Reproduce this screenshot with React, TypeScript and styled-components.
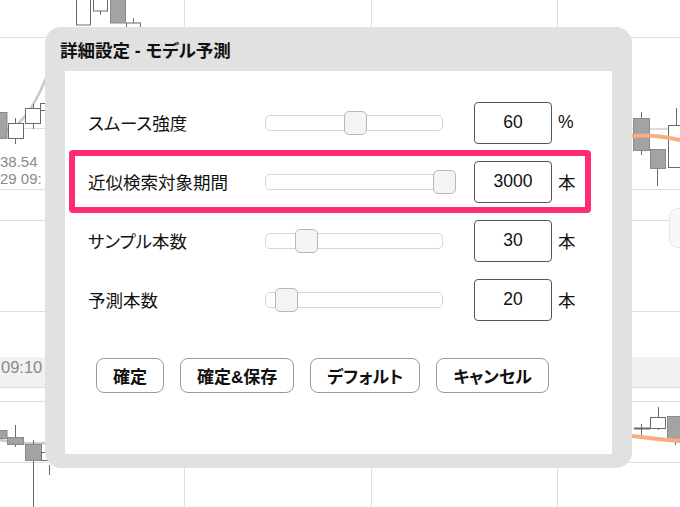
import styled, { createGlobalStyle } from "styled-components";

const GlobalStyle = createGlobalStyle`
  body {
    margin: 0;
    font-family: "Liberation Sans", "Noto Sans CJK JP", sans-serif;
    color: #111;
  }
`;

const settings = [
  { label: "スムース強度", value: "60", unit: "%", thumb: 79 },
  { label: "近似検索対象期間", value: "3000", unit: "本", thumb: 168, highlight: true },
  { label: "サンプル本数", value: "30", unit: "本", thumb: 30 },
  { label: "予測本数", value: "20", unit: "本", thumb: 10 },
];

const actions = ["確定", "確定&保存", "デフォルト", "キャンセル"];

const Screen = styled.div`
  position: relative;
  width: 680px;
  height: 507px;
  overflow: hidden;
  background: #fff;
`;

const ChartLayer = styled.svg`
  position: absolute;
  inset: 0;
`;

const Dialog = styled.div`
  position: absolute;
  left: 45px;
  top: 27px;
  width: 587px;
  height: 441px;
  box-sizing: border-box;
  display: flex;
  flex-direction: column;
  padding-bottom: 14px;
  background: #e1e1e1;
  border-radius: 16px;
`;

const DialogTitle = styled.h2`
  margin: 0;
  height: 44px;
  display: flex;
  align-items: center;
  padding-left: 15px;
  font-size: 17.5px;
  font-weight: 700;
  font-feature-settings: "palt";
`;

const Body = styled.div`
  flex: 1;
  margin: 0 20px;
  padding-top: 22px;
  background: #fff;
`;

const SettingRow = styled.div<{ $highlight?: boolean }>`
  box-sizing: border-box;
  display: flex;
  align-items: center;
  height: ${(p) => (p.$highlight ? "63px" : "59px")};
  margin: ${(p) => (p.$highlight ? "-2px 21px -2px 4px" : "0 21px 0 4px")};
  padding-left: 13px;
  border: 6px solid ${(p) => (p.$highlight ? "#ff2d6f" : "transparent")};
  border-radius: 4px;
`;

const Label = styled.span`
  width: 177px;
  font-size: 17.5px;
  font-feature-settings: "palt";
`;

const Track = styled.div`
  position: relative;
  box-sizing: border-box;
  width: 178px;
  height: 16px;
  border: 1px solid #d6d6d6;
  border-radius: 5px;
  background: #fff;
`;

const Thumb = styled.div`
  position: absolute;
  top: -5px;
  box-sizing: border-box;
  width: 23px;
  height: 24px;
  border: 1px solid #b8b8b8;
  border-radius: 5px;
  background: #f4f4f4;
`;

const ValueBox = styled.input`
  box-sizing: border-box;
  width: 78px;
  height: 42px;
  margin: 0 0 0 31px;
  padding: 0;
  border: 1px solid #555;
  border-radius: 4px;
  background: #fff;
  font: 17.5px "Liberation Sans", "Noto Sans CJK JP", sans-serif;
  color: #111;
  text-align: center;
  outline: none;
`;

const Unit = styled.span`
  margin-left: 6px;
  font-size: 17.5px;
`;

const ButtonRow = styled.div`
  display: flex;
  gap: 16px;
  margin-top: 29px;
  padding-left: 31px;
`;

const ActionButton = styled.button`
  height: 35px;
  padding: 0 16px;
  border: 1px solid #9a9a9a;
  border-radius: 8px;
  background: #fff;
  color: #111;
  font: 700 17px "Liberation Sans", "Noto Sans CJK JP", sans-serif;
  font-feature-settings: "palt";
`;

const Grid = "#dedede";

const Chart = () => (
  <ChartLayer width="680" height="507" viewBox="0 0 680 507">
    <rect x="0" y="357" width="680" height="30" fill="#f1f1f1" />
    {[184.5, 371.5, 557.5].map((x) => (
      <line key={x} x1={x} y1="0" x2={x} y2="507" stroke={Grid} />
    ))}
    {[37.5, 128.5, 189.5, 220.5, 311.5, 387.5, 401.5, 462.5].map((y) => (
      <line key={y} x1="0" y1={y} x2="680" y2={y} stroke={Grid} />
    ))}
    <rect x="669.5" y="208.5" width="30" height="39" rx="8" fill="#f8f8f8" stroke="#e6e6e6" />

    {/* top strip */}
    <g stroke="#6a6a6a" strokeWidth="1">
      <rect x="76.5" y="-2" width="14" height="27" fill="#fff" />
      <line x1="100.5" y1="0" x2="100.5" y2="15" />
      <rect x="93.5" y="-2" width="14" height="13" fill="#fff" />
      <rect x="110.5" y="-2" width="15" height="25" fill="#a3a3a3" stroke="#8a8a8a" />
      <line x1="133.5" y1="18" x2="133.5" y2="27" />
      <rect x="126.5" y="23" width="14" height="6" fill="#fff" />
    </g>

    {/* left edge */}
    <path d="M0 133 Q 26 128 46 78" fill="none" stroke="#c8c8c8" strokeWidth="2.5" />
    <g stroke="#6a6a6a" strokeWidth="1">
      <rect x="-2" y="112.5" width="9" height="26" fill="#a3a3a3" stroke="#8a8a8a" />
      <line x1="15.5" y1="118" x2="15.5" y2="144" />
      <rect x="8.5" y="123.5" width="15" height="15" fill="#fff" />
      <line x1="33.5" y1="104" x2="33.5" y2="129" />
      <rect x="25.5" y="108.5" width="15" height="15" fill="#fff" />
      <rect x="40.5" y="103.5" width="10" height="7" fill="#fff" />
    </g>
    <g fill="#8a8a8a" fontFamily="Liberation Sans, sans-serif" fontSize="15">
      <text x="0" y="167">38.54</text>
      <text x="0" y="184">29 09:</text>
    </g>
    <text x="1" y="373" fill="#8a8a8a" fontFamily="Liberation Sans, sans-serif" fontSize="16.5">
      09:10
    </text>
    <path d="M0 440 Q 25 445 46 443" fill="none" stroke="#c8c8c8" strokeWidth="2.5" />
    <g stroke="#6a6a6a" strokeWidth="1">
      <rect x="-2" y="430.5" width="9" height="8" fill="#a3a3a3" stroke="#8a8a8a" />
      <line x1="15.5" y1="425" x2="15.5" y2="447" />
      <rect x="7.5" y="437.5" width="16" height="7" fill="#a3a3a3" stroke="#8a8a8a" />
      <line x1="33.5" y1="440" x2="33.5" y2="507" />
      <rect x="25.5" y="444.5" width="16" height="16" fill="#a3a3a3" stroke="#8a8a8a" />
      <rect x="41.5" y="452.5" width="8" height="8" fill="#fff" />
      <line x1="49.5" y1="465" x2="49.5" y2="475" />
    </g>

    {/* right edge */}
    <line x1="640" y1="129.5" x2="672" y2="129.5" stroke="#d9d9d9" />
    <g stroke="#6a6a6a" strokeWidth="1">
      <line x1="641.5" y1="112" x2="641.5" y2="155" />
      <rect x="633.5" y="118.5" width="16" height="32" fill="#a3a3a3" stroke="#8a8a8a" />
      <line x1="657.5" y1="150" x2="657.5" y2="186" />
      <rect x="650.5" y="149.5" width="15" height="19" fill="#a3a3a3" stroke="#8a8a8a" />
      <line x1="676.5" y1="108" x2="676.5" y2="126" />
      <rect x="668.5" y="125.5" width="20" height="42" fill="#fff" />
    </g>
    <path d="M632 136 Q 652 134 680 140" fill="none" stroke="#f9ab84" strokeWidth="4" />
    <g stroke="#6a6a6a" strokeWidth="1">
      <line x1="641.5" y1="424" x2="641.5" y2="436" />
      <line x1="634" y1="428.5" x2="650" y2="428.5" strokeWidth="2" />
      <line x1="658.5" y1="407" x2="658.5" y2="430" />
      <rect x="650.5" y="417.5" width="15" height="11" fill="#fff" />
      <line x1="675.5" y1="440" x2="675.5" y2="445" />
      <rect x="667.5" y="416.5" width="18" height="25" fill="#a3a3a3" stroke="#8a8a8a" />
    </g>
    <path d="M632 436 Q 655 439 680 441" fill="none" stroke="#f9ab84" strokeWidth="4" />
  </ChartLayer>
);

export default function App() {
  return (
    <Screen>
      <GlobalStyle />
      <Chart />
      <Dialog>
        <DialogTitle>詳細設定 - モデル予測</DialogTitle>
        <Body>
          {settings.map((s) => (
            <SettingRow key={s.label} $highlight={s.highlight}>
              <Label>{s.label}</Label>
              <Track>
                <Thumb style={{ left: s.thumb - 1 }} />
              </Track>
              <ValueBox readOnly value={s.value} />
              <Unit>{s.unit}</Unit>
            </SettingRow>
          ))}
          <ButtonRow>
            {actions.map((a) => (
              <ActionButton key={a}>{a}</ActionButton>
            ))}
          </ButtonRow>
        </Body>
      </Dialog>
    </Screen>
  );
}
